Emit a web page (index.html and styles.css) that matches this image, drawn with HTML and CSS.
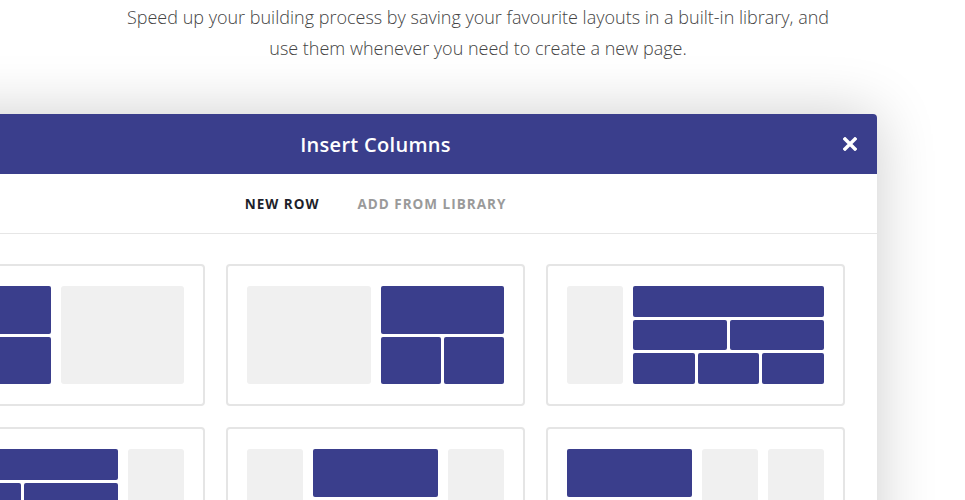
FILE: index.html
```html
<!DOCTYPE html>
<html lang="en">
<head>
<meta charset="utf-8">
<title>Insert Columns</title>
<link rel="stylesheet" href="styles.css">
</head>
<body>
<p class="intro">Speed up your building process by saving your favourite layouts in a built-in library, and<br>use them whenever you need to create a new page.</p>

<div class="modal">
  <div class="modal-head">
    <span></span>
    <h2 class="modal-title">Insert Columns</h2>
    <span class="modal-close">
      <svg class="close-icon" width="14" height="14" viewBox="0 0 14 14" aria-hidden="true">
        <path d="M2 2 L12 12 M12 2 L2 12" stroke="#ffffff" stroke-width="3.4" stroke-linecap="square" fill="none"/>
      </svg>
    </span>
  </div>
  <div class="tabs">
    <span class="tab tab-active">New Row</span>
    <span class="tab">Add From Library</span>
  </div>
  <div class="grid">
    <!-- row 1, card 1 -->
    <div class="card">
      <div class="stack">
        <div class="row"><div class="blk"></div></div>
        <div class="row"><div class="blk"></div><div class="blk"></div></div>
      </div>
      <div class="empty"></div>
    </div>
    <!-- row 1, card 2 -->
    <div class="card">
      <div class="empty"></div>
      <div class="stack">
        <div class="row"><div class="blk"></div></div>
        <div class="row"><div class="blk"></div><div class="blk"></div></div>
      </div>
    </div>
    <!-- row 1, card 3 -->
    <div class="card">
      <div class="empty narrow"></div>
      <div class="stack">
        <div class="row r31"><div class="blk"></div></div>
        <div class="row r30"><div class="blk"></div><div class="blk"></div></div>
        <div class="row r31"><div class="blk"></div><div class="blk"></div><div class="blk"></div></div>
      </div>
    </div>
    <!-- row 2, card 1 -->
    <div class="card">
      <div class="stack">
        <div class="row r31"><div class="blk"></div></div>
        <div class="row r30"><div class="blk"></div><div class="blk"></div></div>
        <div class="row r31"><div class="blk"></div><div class="blk"></div><div class="blk"></div></div>
      </div>
      <div class="empty narrow"></div>
    </div>
    <!-- row 2, card 2 -->
    <div class="card">
      <div class="empty narrow"></div>
      <div class="stack">
        <div class="row"><div class="blk"></div></div>
        <div class="row"><div class="blk"></div><div class="blk"></div></div>
      </div>
      <div class="empty narrow"></div>
    </div>
    <!-- row 2, card 3 -->
    <div class="card">
      <div class="stack">
        <div class="row"><div class="blk"></div></div>
        <div class="row"><div class="blk"></div><div class="blk"></div></div>
      </div>
      <div class="empty narrow"></div>
      <div class="empty narrow"></div>
    </div>
  </div>
</div>
</body>
</html>
```

FILE: styles.css
```css
html, body {
  margin: 0;
  padding: 0;
  background: #ffffff;
}
body {
  width: 965px;
  height: 500px;
  overflow: hidden;
  font-family: "Open Sans", "Noto Sans", sans-serif;
}
.intro {
  margin: 0 9px 0 0;
  padding-top: 2px;
  text-align: center;
  font-size: 18px;
  font-weight: 300;
  line-height: 31px;
  color: #444444;
}
.modal {
  margin-top: 50px;
  margin-left: -126px;
  width: 1003px;
  background: #ffffff;
  border-radius: 4px 4px 0 0;
  box-shadow: 0 0 60px rgba(0, 0, 0, 0.2);
}
.modal-head {
  height: 60px;
  display: grid;
  grid-template-columns: 1fr auto 1fr;
  align-items: center;
  background: #3a3e8c;
  border-radius: 4px 4px 0 0;
  color: #ffffff;
}
.modal-title {
  margin: 0;
  font-size: 20px;
  font-weight: 600;
  letter-spacing: 0.3px;
}
.modal-close {
  justify-self: end;
  padding-right: 20px;
  display: flex;
  align-items: center;
}
.close-icon {
  display: block;
}
.tabs {
  height: 59px;
  display: flex;
  justify-content: center;
  align-items: center;
  gap: 38px;
  border-bottom: 1px solid #e6e6e6;
}
.tab {
  font-size: 13.5px;
  font-weight: 700;
  text-transform: uppercase;
  letter-spacing: 1px;
  color: #9a9a9a;
}
.tab-active {
  color: #1e1f2b;
}
.grid {
  display: grid;
  grid-template-columns: repeat(3, 299px);
  gap: 21px;
  padding: 30px 32px;
}
.card {
  box-sizing: border-box;
  height: 142px;
  padding: 20px 19px;
  border: 2px solid #e5e5e5;
  border-radius: 4px;
  display: flex;
  gap: 10px;
}
.empty {
  flex: 1;
  background: #f0f0f0;
  border-radius: 3px;
}
.empty.narrow {
  flex: 0 0 56px;
}
.stack {
  flex: 1;
  display: flex;
  flex-direction: column;
  gap: 3px;
}
.row {
  flex: 1;
  display: flex;
  gap: 3px;
}
.row.r31 { flex: 0 0 31px; }
.row.r30 { flex: 0 0 30px; }
.blk {
  flex: 1;
  background: #3a3e8c;
  border-radius: 2px;
}
```
